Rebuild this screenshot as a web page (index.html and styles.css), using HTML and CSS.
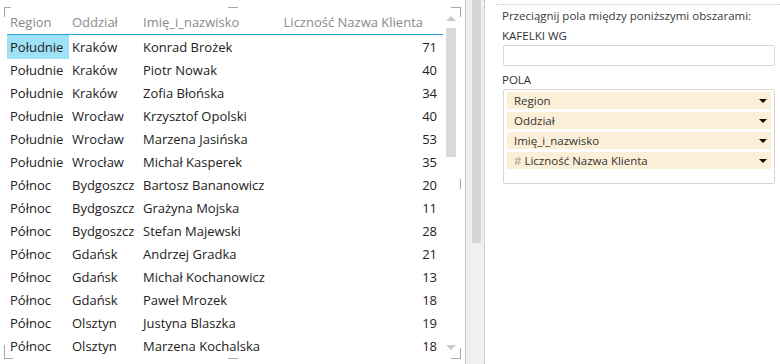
FILE: index.html
```html
<!DOCTYPE html>
<html lang="pl">
<head>
<meta charset="utf-8">
<link rel="stylesheet" href="styles.css">
</head>
<body>
<div class="app">
  <div class="left">
    <span class="tick tl"></span>
    <span class="tick tm"></span>
    <span class="tick tr"></span>
    <span class="tick rm"></span>
    <span class="tick br"></span>
    <span class="tick bm"></span>
    <span class="tick bl"></span>
    <div class="tablewrap">
      <div class="grid">
        <div class="row head">
          <div class="c1">Region</div><div class="c2">Oddział</div><div class="c3">Imię_i_nazwisko</div><div class="c4">Liczność Nazwa Klienta</div>
        </div>
        <div class="row"><div class="c1 sel">Południe</div><div class="c2">Kraków</div><div class="c3">Konrad Brożek</div><div class="c4">71</div></div>
        <div class="row"><div class="c1">Południe</div><div class="c2">Kraków</div><div class="c3">Piotr Nowak</div><div class="c4">40</div></div>
        <div class="row"><div class="c1">Południe</div><div class="c2">Kraków</div><div class="c3">Zofia Błońska</div><div class="c4">34</div></div>
        <div class="row"><div class="c1">Południe</div><div class="c2">Wrocław</div><div class="c3">Krzysztof Opolski</div><div class="c4">40</div></div>
        <div class="row"><div class="c1">Południe</div><div class="c2">Wrocław</div><div class="c3">Marzena Jasińska</div><div class="c4">53</div></div>
        <div class="row"><div class="c1">Południe</div><div class="c2">Wrocław</div><div class="c3">Michał Kasperek</div><div class="c4">35</div></div>
        <div class="row"><div class="c1">Północ</div><div class="c2">Bydgoszcz</div><div class="c3">Bartosz Bananowicz</div><div class="c4">20</div></div>
        <div class="row"><div class="c1">Północ</div><div class="c2">Bydgoszcz</div><div class="c3">Grażyna Mojska</div><div class="c4">11</div></div>
        <div class="row"><div class="c1">Północ</div><div class="c2">Bydgoszcz</div><div class="c3">Stefan Majewski</div><div class="c4">28</div></div>
        <div class="row"><div class="c1">Północ</div><div class="c2">Gdańsk</div><div class="c3">Andrzej Gradka</div><div class="c4">21</div></div>
        <div class="row"><div class="c1">Północ</div><div class="c2">Gdańsk</div><div class="c3">Michał Kochanowicz</div><div class="c4">13</div></div>
        <div class="row"><div class="c1">Północ</div><div class="c2">Gdańsk</div><div class="c3">Paweł Mrozek</div><div class="c4">18</div></div>
        <div class="row"><div class="c1">Północ</div><div class="c2">Olsztyn</div><div class="c3">Justyna Blaszka</div><div class="c4">19</div></div>
        <div class="row"><div class="c1">Północ</div><div class="c2">Olsztyn</div><div class="c3">Marzena Kochalska</div><div class="c4">18</div></div>
      </div>
      <div class="vscroll">
        <span class="arrow up"></span>
        <span class="vthumb"></span>
        <span class="spacer"></span>
        <span class="arrow down"></span>
      </div>
    </div>
  </div>
  <div class="divider"></div>
  <div class="outer-scroll"><span class="othumb"></span></div>
  <div class="right">
    <div class="hint">Przeciągnij pola między poniższymi obszarami:</div>
    <div class="label">KAFELKI WG</div>
    <div class="inputbox"></div>
    <div class="label pola">POLA</div>
    <div class="fields">
      <div class="field"><span class="fname">Region</span><span class="caret"></span></div>
      <div class="field"><span class="fname">Oddział</span><span class="caret"></span></div>
      <div class="field"><span class="fname">Imię_i_nazwisko</span><span class="caret"></span></div>
      <div class="field"><span class="fname"><span class="hash">#</span> Liczność Nazwa Klienta</span><span class="caret"></span></div>
    </div>
  </div>
</div>
</body>
</html>
```
FILE: styles.css
```css
* { box-sizing: border-box; }
html, body { margin: 0; padding: 0; background: #fff; }
body { width: 780px; height: 364px; overflow: hidden; font-family: "Open Sans", "Noto Sans", sans-serif; }

.app { display: flex; height: 364px; }

.left { position: relative; width: 465px; height: 364px; flex: none; }

.tick { position: absolute; display: block; border-color: #a6a6a6; border-style: solid; border-width: 0; }
.tick.tl { left: 4px; top: 7px; width: 7px; height: 10px; border-left-width: 1px; border-top-width: 1px; }
.tick.tm { left: 228px; top: 7px; width: 10px; height: 1px; border-top-width: 1px; }
.tick.tr { left: 451px; top: 7px; width: 10px; height: 10px; border-right-width: 1px; border-top-width: 1px; }
.tick.rm { left: 460px; top: 179px; width: 1px; height: 10px; border-left-width: 1px; }
.tick.br { left: 451px; top: 348px; width: 10px; height: 11px; border-right-width: 1px; border-bottom-width: 1px; }
.tick.bm { left: 228px; top: 358px; width: 10px; height: 1px; border-top-width: 1px; }
.tick.bl { left: 4px; top: 345px; width: 9px; height: 14px; border-left-width: 1px; border-bottom-width: 1px; }

.tablewrap { display: flex; padding: 10px 0 0 7px; gap: 3px; height: 364px; }

.grid { width: 436px; flex: none; font-size: 13px; color: #222; }
.row { display: flex; height: 23px; align-items: center; }
.row.head { height: 25px; color: #8a8a8a; border-bottom: 1px solid #2aa4d6; }
.row > div { height: 100%; display: flex; align-items: center; padding-left: 3px; white-space: nowrap; }
.c1 { width: 62px; }
.c2 { width: 71px; }
.c3 { width: 135px; }
.c4 { width: 168px; justify-content: flex-end; padding-right: 6px; }
.row.head .c4 { padding-right: 20px; }
.row > .sel { background: #9fe2f8; height: 24px; align-self: flex-start; }

.vscroll { width: 10px; display: flex; flex-direction: column; align-items: center; padding: 6px 0 14px; }
.arrow { display: block; width: 0; height: 0; border-left: 5px solid transparent; border-right: 5px solid transparent; }
.arrow.up { border-bottom: 5px solid #c9c9c9; }
.arrow.down { border-top: 5px solid #c9c9c9; }
.vthumb { display: block; width: 10px; height: 129px; margin-top: 7px; background: #d9d9d9; }
.spacer { flex: 1; }

.divider { width: 1px; flex: none; background: #c4c4c4; }
.outer-scroll { width: 19px; flex: none; background: #f0f0f0; border-right: 1px dotted #b4b4b4; padding-left: 6px; }
.othumb { display: block; width: 9px; height: 243px; background: #d6d6d6; }

.right { flex: 1; padding: 0 5px 0 17px; font-size: 11.5px; color: #3a3a3a; position: relative; }
.right::before { content: ""; display: block; height: 0; margin: 4px -5px 0 -6px; border-top: 1px dotted #c8c8c8; }
.hint { height: 17px; line-height: 17px; margin-top: 2px; }
.label { height: 14px; line-height: 14px; margin-top: 5px; color: #333; }
.label.pola { margin-top: 7px; }
.inputbox { height: 21px; margin: 2px 0 0 1px; border: 1px solid #d6d6d6; border-radius: 2px; }
.fields { margin: 2px 0 0 1px; height: 95px; border: 1px solid #d6d6d6; border-radius: 2px; padding: 2px 3px; display: flex; flex-direction: column; gap: 3px; }
.field { height: 17px; flex: none; background: #fcefd8; display: flex; align-items: center; justify-content: space-between; padding: 0 4px 0 7px; color: #333; }
.hash { color: #999; }
.caret { width: 0; height: 0; border-left: 4px solid transparent; border-right: 4px solid transparent; border-top: 4px solid #111; }
```
